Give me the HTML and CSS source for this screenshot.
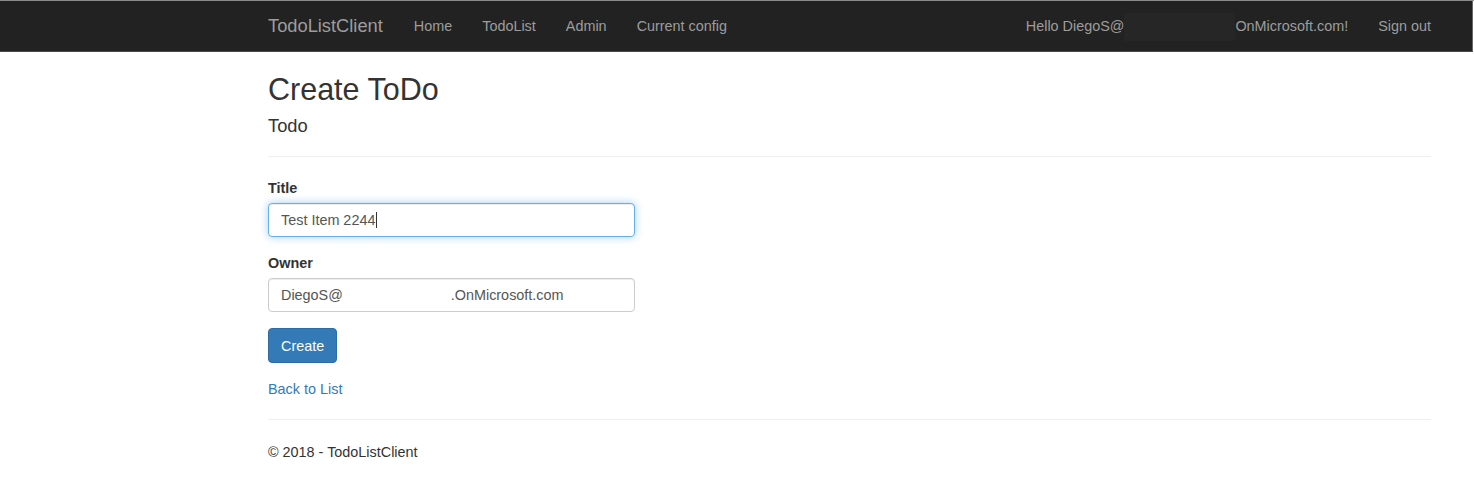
FILE: index.html
```html
<!DOCTYPE html>
<html lang="en">
<head>
<meta charset="utf-8">
<title>Create - TodoListClient</title>
<link rel="stylesheet" href="styles.css">
</head>
<body>
<nav class="navbar">
  <div class="nav-container">
    <a class="brand" href="#">TodoListClient</a>
    <ul class="nav">
      <li><a href="#">Home</a></li>
      <li><a href="#">TodoList</a></li>
      <li><a href="#">Admin</a></li>
      <li><a href="#">Current config</a></li>
    </ul>
    <ul class="nav nav-right">
      <li><a href="#">Hello DiegoS@<span class="redact"></span><span class="domain">OnMicrosoft.com!</span></a></li>
      <li><a href="#">Sign out</a></li>
    </ul>
  </div>
</nav>
<main class="container">
  <h2 class="title">Create ToDo</h2>
  <h4 class="subtitle">Todo</h4>
  <hr class="rule">
  <form class="form">
    <div class="form-group">
      <label class="label" for="title">Title</label>
      <div class="field">
        <input id="title" class="input input-focus" type="text" value="Test Item 2244">
        <span class="caret"></span>
      </div>
    </div>
    <div class="form-group">
      <label class="label" for="owner">Owner</label>
      <div class="field">
        <input id="owner" class="input" type="text" value="DiegoS@                           .OnMicrosoft.com">
      </div>
    </div>
    <div class="form-actions">
      <button type="button" class="btn">Create</button>
    </div>
  </form>
  <div class="back"><a href="#">Back to List</a></div>
  <hr class="rule rule-footer">
  <footer class="footer">
    <p>&copy; 2018 - TodoListClient</p>
  </footer>
</main>
</body>
</html>
```

FILE: styles.css
```css
* { box-sizing: border-box; }
html, body {
  margin: 0;
  padding: 0;
  background: #fff;
}
body {
  font-family: "Liberation Sans", Arial, sans-serif;
  font-size: 14.4px;
  line-height: 20px;
  color: #333;
  border-top: 1px solid #8c8c8c;
}
a { text-decoration: none; }

.navbar {
  background: #222;
  height: 51px;
  width: 1473px;
  border-bottom: 1px solid #4a4a4a;
  border-right: 1px solid #6a6a6a;
}
.nav-container {
  margin-left: 253px;
  width: 1193px;
  padding: 0 15px;
  display: flex;
  align-items: flex-start;
}
.brand {
  display: block;
  margin-left: -15px;
  padding: 15px;
  font-size: 18.3px;
  line-height: 20px;
  height: 50px;
  color: #9d9d9d;
}
.nav {
  list-style: none;
  margin: 0;
  padding: 0;
  display: flex;
}
.nav a {
  display: block;
  padding: 15px;
  line-height: 20px;
  color: #9d9d9d;
  white-space: nowrap;
}
.nav li:first-child a {
  padding-left: 16px;
}
.nav-right {
  margin-left: auto;
  margin-right: -15px;
}
.nav-right li:first-child a {
  padding-left: 15px;
}
.redact {
  display: inline-block;
  width: 111px;
  height: 28px;
  margin: -8px 0 -8px 0;
  vertical-align: middle;
  background: #262626;
}

.container {
  margin-left: 253px;
  width: 1193px;
  padding: 0 15px;
}
.title {
  margin: 21px 0 10px;
  font-size: 30.5px;
  line-height: 33px;
  font-weight: 400;
  color: #333;
}
.subtitle {
  margin: 10px 0 10px;
  font-size: 18.3px;
  line-height: 20px;
  font-weight: 400;
  color: #333;
}
.rule {
  margin: 20px 0;
  border: 0;
  border-top: 1px solid #eee;
  height: 0;
}
.form {
  padding-top: 1px;
}
.form-group {
  margin-bottom: 16px;
}
.label {
  display: inline-block;
  font-weight: 700;
  margin-bottom: 5px;
  line-height: 20px;
}
.field {
  position: relative;
  width: 367px;
}
.input {
  display: block;
  width: 367px;
  height: 34px;
  padding: 6px 12px;
  font-family: "Liberation Sans", Arial, sans-serif;
  font-size: 14.4px;
  line-height: 20px;
  color: #555;
  background: #fff;
  border: 1px solid #ccc;
  border-radius: 4px;
  box-shadow: inset 0 1px 1px rgba(0,0,0,.075);
  outline: none;
  white-space: pre;
}
.input-focus {
  border-color: #66afe9;
  box-shadow: inset 0 1px 1px rgba(0,0,0,.075), 0 0 8px rgba(102,175,233,.6);
  caret-color: transparent;
}
.caret {
  position: absolute;
  left: 108px;
  top: 9px;
  width: 1px;
  height: 16px;
  background: #333;
}
.form-actions {
  margin-bottom: 16px;
}
.btn {
  display: inline-block;
  height: 35px;
  padding: 6px 12px;
  font-family: "Liberation Sans", Arial, sans-serif;
  font-size: 14.4px;
  line-height: 20px;
  color: #fff;
  background: #337ab7;
  border: 1px solid #2e6da4;
  border-radius: 4px;
  cursor: pointer;
}
.back a {
  color: #337ab7;
}
.rule-footer {
  margin-top: 20px;
}
.footer p {
  margin: 22px 0 10px;
}
```
